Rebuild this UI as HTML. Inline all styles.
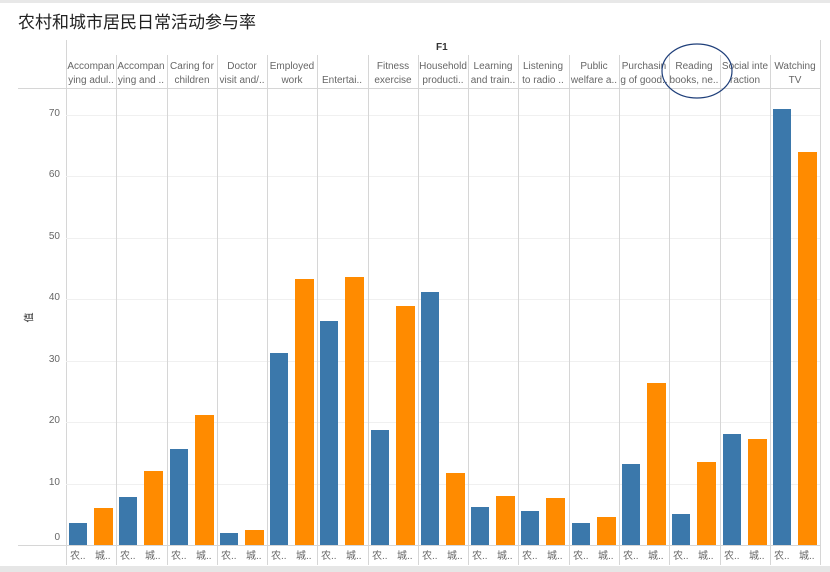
<!DOCTYPE html>
<html><head><meta charset="utf-8"><style>
body{margin:0;width:830px;height:572px;background:#fff;position:relative;overflow:hidden;font-family:"Liberation Sans","Noto Sans CJK SC",sans-serif;color:#555}
div{position:absolute;box-sizing:border-box}
.t{left:18px;top:8px;font-size:17px;color:#222}
.vl{width:1px;background:#d6d6d6}
.hl{height:1px;background:#f0f0f0}
.lab{top:60px;font-size:10px;line-height:14px;text-align:center;color:#666;width:50px;white-space:nowrap;overflow:hidden}
.yt{font-size:10px;color:#666;width:30px;text-align:right;left:30px}
.b{background:#3b78ab;width:18px;bottom:27px}
.o{background:#ff8b00;width:19px;bottom:27px}
.bl{top:547px;font-size:10px;color:#666}
</style></head><body>
<div style="left:0;top:0;width:830px;height:3px;background:#e8e8e8"></div>
<div class="t">农村和城市居民日常活动参与率</div>
<div style="left:436px;top:42px;font-size:10px;font-weight:bold;color:#333">F1</div>
<div style="left:66px;top:40px;width:1px;height:525px;background:#d6d6d6"></div>
<div style="left:18px;top:88px;width:802px;height:1px;background:#d6d6d6"></div>
<div style="left:18px;top:545px;width:802px;height:1px;background:#d6d6d6"></div>
<div class="hl" style="left:66px;top:115px;width:754px"></div>
<div class="hl" style="left:66px;top:176px;width:754px"></div>
<div class="hl" style="left:66px;top:238px;width:754px"></div>
<div class="hl" style="left:66px;top:299px;width:754px"></div>
<div class="hl" style="left:66px;top:361px;width:754px"></div>
<div class="hl" style="left:66px;top:422px;width:754px"></div>
<div class="hl" style="left:66px;top:484px;width:754px"></div>
<div class="yt" style="top:108px">70</div>
<div class="yt" style="top:169px">60</div>
<div class="yt" style="top:231px">50</div>
<div class="yt" style="top:292px">40</div>
<div class="yt" style="top:354px">30</div>
<div class="yt" style="top:415px">20</div>
<div class="yt" style="top:477px">10</div>
<div class="yt" style="top:532px">0</div>
<div style="left:23px;top:310px;font-size:10px;color:#333;transform:rotate(-90deg)">值</div>
<div class="vl" style="left:116px;top:55px;height:510px"></div>
<div class="vl" style="left:167px;top:55px;height:510px"></div>
<div class="vl" style="left:217px;top:55px;height:510px"></div>
<div class="vl" style="left:267px;top:55px;height:510px"></div>
<div class="vl" style="left:317px;top:55px;height:510px"></div>
<div class="vl" style="left:368px;top:55px;height:510px"></div>
<div class="vl" style="left:418px;top:55px;height:510px"></div>
<div class="vl" style="left:468px;top:55px;height:510px"></div>
<div class="vl" style="left:518px;top:55px;height:510px"></div>
<div class="vl" style="left:569px;top:55px;height:510px"></div>
<div class="vl" style="left:619px;top:55px;height:510px"></div>
<div class="vl" style="left:669px;top:55px;height:510px"></div>
<div class="vl" style="left:720px;top:55px;height:510px"></div>
<div class="vl" style="left:770px;top:55px;height:510px"></div>
<div class="vl" style="left:820px;top:40px;height:525px"></div>
<div class="lab" style="left:66px">Accompan<br>ying adul..</div>
<div class="lab" style="left:116px">Accompan<br>ying and ..</div>
<div class="lab" style="left:167px">Caring for<br>children</div>
<div class="lab" style="left:217px">Doctor<br>visit and/..</div>
<div class="lab" style="left:267px">Employed<br>work</div>
<div class="lab" style="left:317px"><br>Entertai..</div>
<div class="lab" style="left:368px">Fitness<br>exercise</div>
<div class="lab" style="left:418px">Household<br>producti..</div>
<div class="lab" style="left:468px">Learning<br>and train..</div>
<div class="lab" style="left:518px">Listening<br>to radio ..</div>
<div class="lab" style="left:569px">Public<br>welfare a..</div>
<div class="lab" style="left:619px">Purchasin<br>g of good..</div>
<div class="lab" style="left:669px">Reading<br>books, ne..</div>
<div class="lab" style="left:720px">Social inte<br>raction</div>
<div class="lab" style="left:770px">Watching<br>TV</div>
<div class="b" style="left:69px;height:22px"></div><div class="o" style="left:94px;height:37px"></div>
<div class="b" style="left:119px;height:48px"></div><div class="o" style="left:144px;height:74px"></div>
<div class="b" style="left:170px;height:96px"></div><div class="o" style="left:195px;height:130px"></div>
<div class="b" style="left:220px;height:12px"></div><div class="o" style="left:245px;height:15px"></div>
<div class="b" style="left:270px;height:192px"></div><div class="o" style="left:295px;height:266px"></div>
<div class="b" style="left:320px;height:224px"></div><div class="o" style="left:345px;height:268px"></div>
<div class="b" style="left:371px;height:115px"></div><div class="o" style="left:396px;height:239px"></div>
<div class="b" style="left:421px;height:253px"></div><div class="o" style="left:446px;height:72px"></div>
<div class="b" style="left:471px;height:38px"></div><div class="o" style="left:496px;height:49px"></div>
<div class="b" style="left:521px;height:34px"></div><div class="o" style="left:546px;height:47px"></div>
<div class="b" style="left:572px;height:22px"></div><div class="o" style="left:597px;height:28px"></div>
<div class="b" style="left:622px;height:81px"></div><div class="o" style="left:647px;height:162px"></div>
<div class="b" style="left:672px;height:31px"></div><div class="o" style="left:697px;height:83px"></div>
<div class="b" style="left:723px;height:111px"></div><div class="o" style="left:748px;height:106px"></div>
<div class="b" style="left:773px;height:436px"></div><div class="o" style="left:798px;height:393px"></div>
<div class="bl" style="left:70px">农..</div><div class="bl" style="left:95px">城..</div>
<div class="bl" style="left:120px">农..</div><div class="bl" style="left:145px">城..</div>
<div class="bl" style="left:171px">农..</div><div class="bl" style="left:196px">城..</div>
<div class="bl" style="left:221px">农..</div><div class="bl" style="left:246px">城..</div>
<div class="bl" style="left:271px">农..</div><div class="bl" style="left:296px">城..</div>
<div class="bl" style="left:321px">农..</div><div class="bl" style="left:346px">城..</div>
<div class="bl" style="left:372px">农..</div><div class="bl" style="left:397px">城..</div>
<div class="bl" style="left:422px">农..</div><div class="bl" style="left:447px">城..</div>
<div class="bl" style="left:472px">农..</div><div class="bl" style="left:497px">城..</div>
<div class="bl" style="left:522px">农..</div><div class="bl" style="left:547px">城..</div>
<div class="bl" style="left:573px">农..</div><div class="bl" style="left:598px">城..</div>
<div class="bl" style="left:623px">农..</div><div class="bl" style="left:648px">城..</div>
<div class="bl" style="left:673px">农..</div><div class="bl" style="left:698px">城..</div>
<div class="bl" style="left:724px">农..</div><div class="bl" style="left:749px">城..</div>
<div class="bl" style="left:774px">农..</div><div class="bl" style="left:799px">城..</div>
<div style="left:0;top:566px;width:830px;height:6px;background:#e6e6e6"></div>
<svg style="position:absolute;left:0;top:0" width="830" height="572"><ellipse cx="697" cy="71" rx="35" ry="27" fill="none" stroke="#1f3f7a" stroke-width="1.2"/></svg>
</body></html>
